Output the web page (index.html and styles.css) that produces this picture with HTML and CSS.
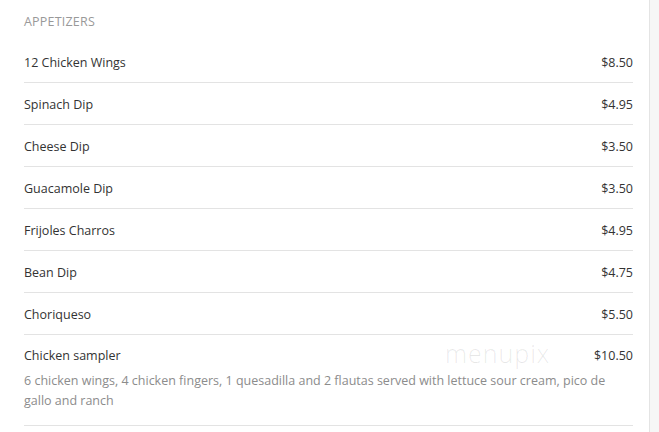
FILE: index.html
```html
<!DOCTYPE html>
<html>
<head>
<meta charset="utf-8">
<link rel="stylesheet" href="styles.css">
</head>
<body>
<div class="page">
  <main class="menu">
    <h2 class="section-title">APPETIZERS</h2>
    <ul class="items">
      <li class="item"><div class="row"><span class="name">12 Chicken Wings</span><span class="price">$8.50</span></div></li>
      <li class="item"><div class="row"><span class="name">Spinach Dip</span><span class="price">$4.95</span></div></li>
      <li class="item"><div class="row"><span class="name">Cheese Dip</span><span class="price">$3.50</span></div></li>
      <li class="item"><div class="row"><span class="name">Guacamole Dip</span><span class="price">$3.50</span></div></li>
      <li class="item"><div class="row"><span class="name">Frijoles Charros</span><span class="price">$4.95</span></div></li>
      <li class="item"><div class="row"><span class="name">Bean Dip</span><span class="price">$4.75</span></div></li>
      <li class="item"><div class="row"><span class="name">Choriqueso</span><span class="price">$5.50</span></div></li>
      <li class="item item-desc">
        <div class="row"><span class="name">Chicken sampler</span><span class="price">$10.50</span></div>
        <p class="desc">6 chicken wings, 4 chicken fingers, 1 quesadilla and 2 flautas served with lettuce sour cream, pico de gallo and ranch</p>
        <span class="watermark">menupix</span>
      </li>
    </ul>
  </main>
  <aside class="side"></aside>
</div>
</body>
</html>
```
FILE: styles.css
```css
* { box-sizing: border-box; }
html, body { margin: 0; padding: 0; background: #fff; }
body {
  font-family: "Open Sans", "Noto Sans", "Liberation Sans", sans-serif;
  color: #333;
  font-size: 12.5px;
}
.page {
  display: flex;
  height: 432px;
  overflow: hidden;
}
.menu {
  width: 649px;
  padding: 12px 16px 0 24px;
}
.side {
  flex: 1;
  border-left: 1px solid #e4e4e4;
  background: #f6f6f6;
}
.section-title {
  margin: 0 0 9px;
  font-size: 12.5px;
  font-weight: 400;
  color: #999;
  line-height: 20px;
  letter-spacing: 0.2px;
}
.items { list-style: none; margin: 0; padding: 0; }
.item {
  border-bottom: 1px solid #e3e3e3;
  padding: 11px 0 9px;
  position: relative;
}
.row {
  display: flex;
  justify-content: space-between;
  line-height: 21px;
}
.item-desc { padding-top: 10px; padding-bottom: 14px; }
.desc {
  margin: 5px 0 0;
  color: #8c8c8c;
  line-height: 20px;
  padding-right: 24px;
}
.watermark {
  position: absolute;
  left: 421px;
  top: 6px;
  font-size: 25px;
  line-height: 24px;
  font-weight: 300;
  color: rgba(0,0,0,0.09);
  letter-spacing: 1px;
}
```
